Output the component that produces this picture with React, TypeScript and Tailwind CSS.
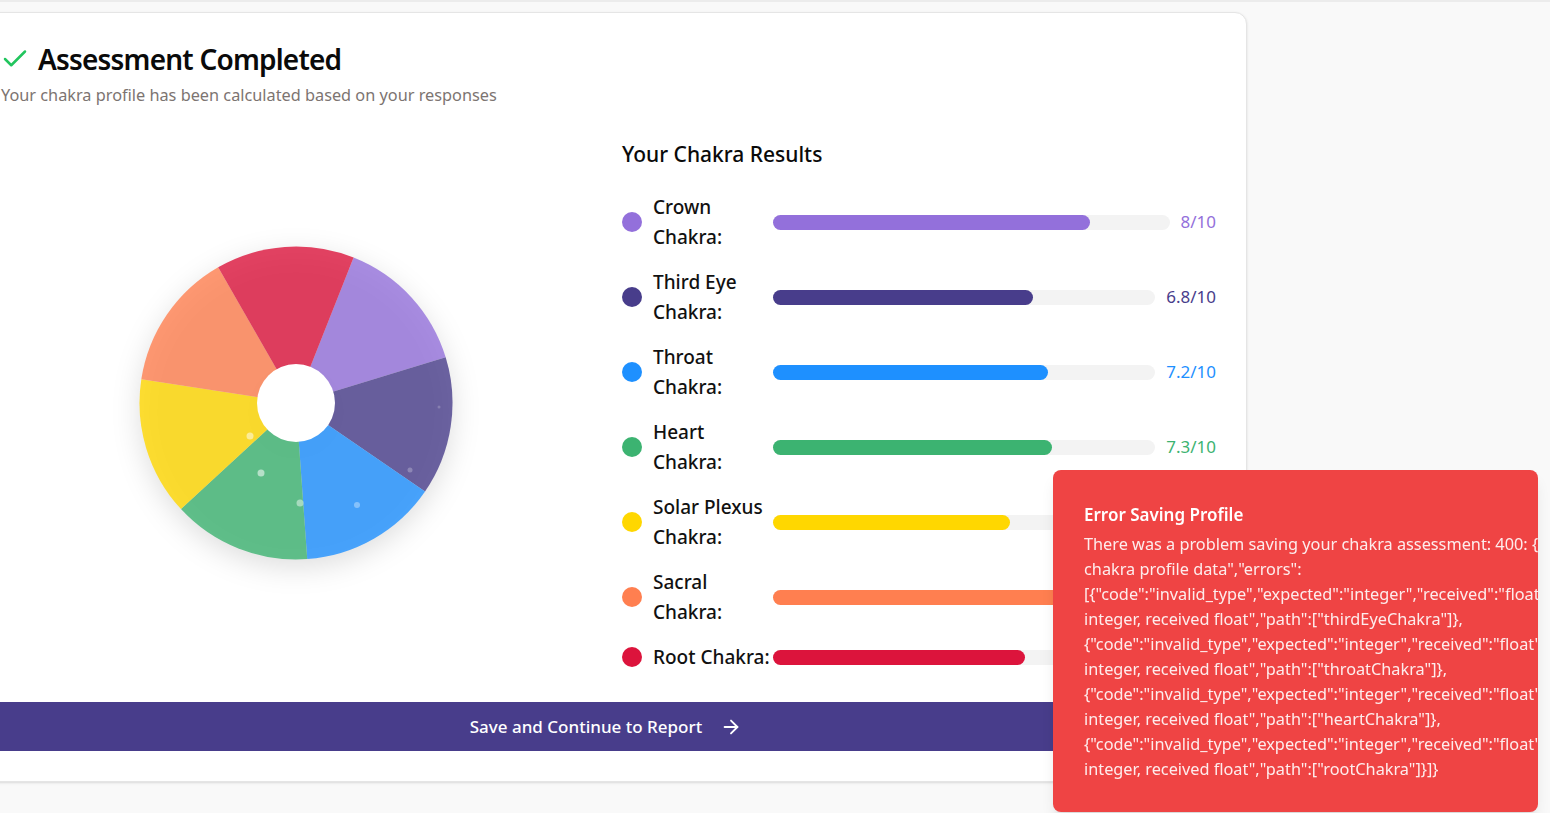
import { Check, ArrowRight } from "lucide-react";

const chakras = [
  { lines: ["Crown", "Chakra:"], score: 8, value: "8/10", fill: "#9370DB", dot: "bg-[#9370DB]", bar: "bg-[#9370DB]", text: "text-[#9370DB]" },
  { lines: ["Third Eye", "Chakra:"], score: 6.8, value: "6.8/10", fill: "#483D8B", dot: "bg-[#483D8B]", bar: "bg-[#483D8B]", text: "text-[#483D8B]" },
  { lines: ["Throat", "Chakra:"], score: 7.2, value: "7.2/10", fill: "#1E90FF", dot: "bg-[#1E90FF]", bar: "bg-[#1E90FF]", text: "text-[#1E90FF]" },
  { lines: ["Heart", "Chakra:"], score: 7.3, value: "7.3/10", fill: "#3CB371", dot: "bg-[#3CB371]", bar: "bg-[#3CB371]", text: "text-[#3CB371]" },
  { lines: ["Solar Plexus", "Chakra:"], score: 6.2, value: "6.2/10", fill: "#FFD700", dot: "bg-[#FFD700]", bar: "bg-[#FFD700]", text: "text-[#FFD700]" },
  { lines: ["Sacral", "Chakra:"], score: 7.6, value: "7.6/10", fill: "#FF7F50", dot: "bg-[#FF7F50]", bar: "bg-[#FF7F50]", text: "text-[#FF7F50]" },
  { lines: ["Root Chakra:"], score: 6.6, value: "6.6/10", fill: "#DC143C", dot: "bg-[#DC143C]", bar: "bg-[#DC143C]", text: "text-[#DC143C]" },
];

const errorLines = [
  'There was a problem saving your chakra assessment: 400: {"message":"Invalid',
  'chakra profile data","errors":',
  '[{"code":"invalid_type","expected":"integer","received":"float","message":"Expected',
  'integer, received float","path":["thirdEyeChakra"]},',
  '{"code":"invalid_type","expected":"integer","received":"float","message":"Expected',
  'integer, received float","path":["throatChakra"]},',
  '{"code":"invalid_type","expected":"integer","received":"float","message":"Expected',
  'integer, received float","path":["heartChakra"]},',
  '{"code":"invalid_type","expected":"integer","received":"float","message":"Expected',
  'integer, received float","path":["rootChakra"]}]}',
];

// little sparkles sitting on the wheel
const sparkles = [
  { x: -46, y: 33, r: 3.5, o: 0.5 },
  { x: -35, y: 70, r: 3.5, o: 0.55 },
  { x: 4, y: 100, r: 3.5, o: 0.45 },
  { x: 61, y: 102, r: 3, o: 0.35 },
  { x: 114, y: 67, r: 2.5, o: 0.25 },
  { x: 143, y: 4, r: 1.5, o: 0.2 },
];

function ChakraWheel() {
  const size = 330;
  const c = size / 2;
  const r = 156.5;
  const step = 360 / chakras.length;
  const pt = (deg: number, rad: number) => {
    const a = (deg * Math.PI) / 180;
    return [c + rad * Math.sin(a), c - rad * Math.cos(a)];
  };

  return (
    <svg
      width={size}
      height={size}
      viewBox={`0 0 ${size} ${size}`}
      className="drop-shadow-[0_8px_14px_rgba(0,0,0,0.16)]"
    >
      {chakras.map((ch, i) => {
        const a0 = 21.6 + i * step;
        const a1 = a0 + step;
        const [x0, y0] = pt(a0, r);
        const [x1, y1] = pt(a1, r);
        return (
          <path
            key={ch.value + i}
            d={`M${c} ${c} L${x0} ${y0} A${r} ${r} 0 0 1 ${x1} ${y1} Z`}
            fill={ch.fill}
            fillOpacity={0.8}
          />
        );
      })}
      {sparkles.map((s, i) => (
        <circle key={i} cx={c + s.x} cy={c + s.y} r={s.r} fill="#ffffff" fillOpacity={s.o} />
      ))}
      <circle cx={c} cy={c} r={39} fill="#ffffff" />
    </svg>
  );
}

function ChakraRow({ item }: { item: (typeof chakras)[number] }) {
  return (
    <div className="flex items-center pr-[6px]">
      <span className={`h-5 w-5 shrink-0 rounded-full ${item.dot}`} />
      <div className="ml-[11px] w-[120px] shrink-0 text-[19px] leading-[30px] font-medium text-[#111]">
        {item.lines.map((l) => (
          <span key={l} className="block whitespace-nowrap">
            {l}
          </span>
        ))}
      </div>
      <div className="h-[15px] flex-1 rounded-full bg-[#f3f3f3]">
        <div
          className={`h-full rounded-full ${item.bar}`}
          style={{ width: `${item.score * 10}%` }}
        />
      </div>
      <span className={`ml-[11px] text-[17px] ${item.text}`}>{item.value}</span>
    </div>
  );
}

export default function App() {
  return (
    <div className="relative min-h-screen overflow-hidden bg-[#f9f9f9] font-['Noto_Sans',sans-serif]">
      <div className="h-[2px] bg-[#ececec]" />
      <div className="pt-[10px]">
        <div className="ml-[-35px] w-[1282px] rounded-xl border border-[#e5e5e5] bg-white shadow-sm">
          <div className="pl-[36px] pt-[28px]">
            <div className="flex items-center">
              <Check className="ml-[-2px] text-[#22c55e]" size={30} strokeWidth={2} />
              <h1 className="ml-[8px] text-[28px] leading-[36px] font-semibold tracking-[-0.8px] text-[#0a0a0a]">
                Assessment Completed
              </h1>
            </div>
            <p className="mt-[6px] ml-[-1px] text-[16.3px] leading-[24px] text-[#7c7471]">
              Your chakra profile has been calculated based on your responses
            </p>
          </div>

          <div className="grid grid-cols-2 gap-8 px-6 pt-[32px]">
            <div className="flex items-center justify-center pl-[12px] pb-[6px]">
              <ChakraWheel />
            </div>
            <div>
              <h2 className="mb-[23px] text-[21px] leading-[30px] font-medium text-[#0a0a0a]">
                Your Chakra Results
              </h2>
              <div className="flex flex-col gap-[15px]">
                {chakras.map((ch) => (
                  <ChakraRow key={ch.value + ch.lines[0]} item={ch} />
                ))}
              </div>
            </div>
          </div>

          <div className="px-6 pt-[30px] pb-[30px]">
            <button className="flex h-[49px] w-full items-center justify-center rounded-md bg-[#483D8B] text-[17px] font-medium text-white">
              Save and Continue to Report
              <ArrowRight className="ml-[18px]" size={22} strokeWidth={2} />
            </button>
          </div>
        </div>
      </div>

      <div className="fixed right-[12px] bottom-[1px] w-[485px] overflow-hidden rounded-lg bg-[#ef4444] pt-[32px] pb-[30px] pl-[31px] text-white shadow-lg">
        <div className="text-[17px] leading-[26px] font-semibold">Error Saving Profile</div>
        <div className="mt-[4px] text-[16.3px] leading-[25px] text-white/90">
          {errorLines.map((l, i) => (
            <span key={i} className="block whitespace-nowrap">
              {l}
            </span>
          ))}
        </div>
      </div>
    </div>
  );
}
